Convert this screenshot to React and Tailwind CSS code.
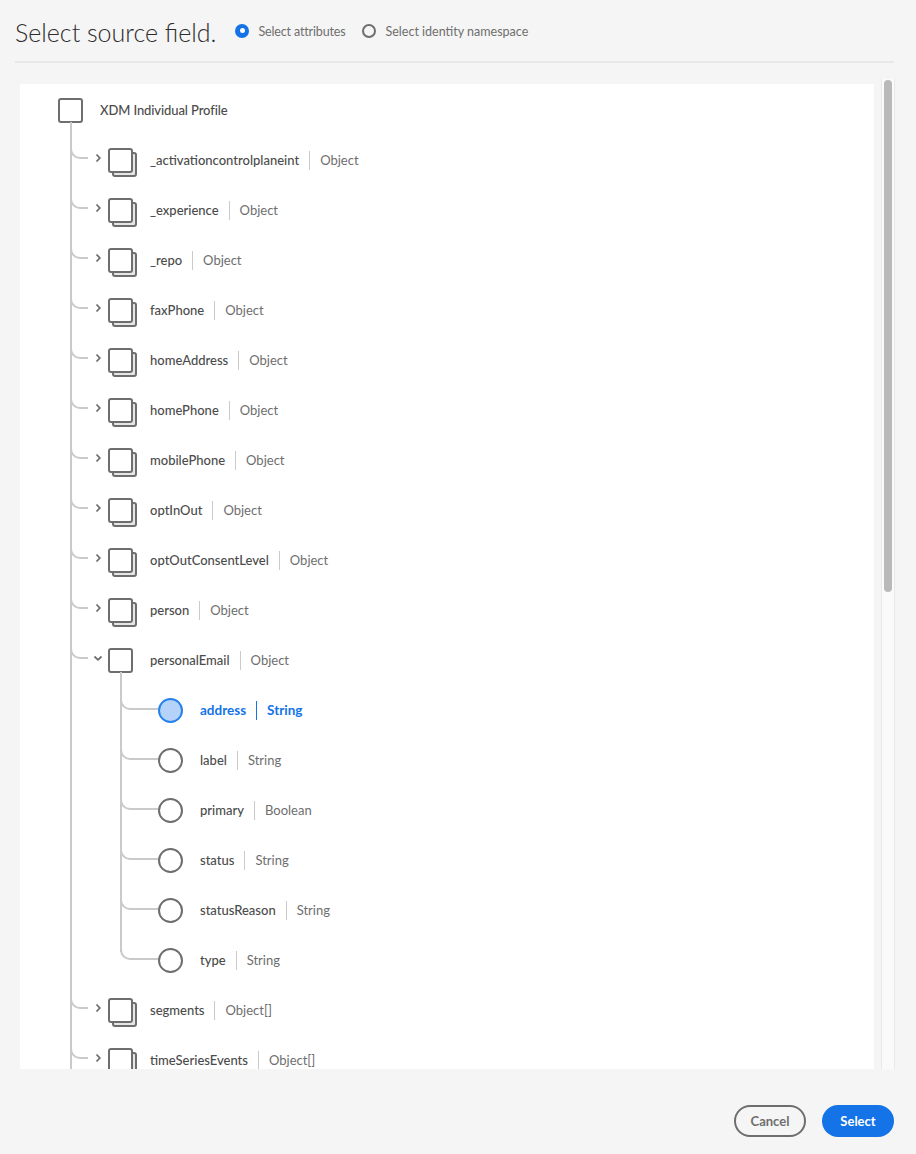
const Box = ({ stacked }) => (
  <span className="relative block w-[25px] h-[25px] shrink-0">
    {stacked && <span className="absolute left-[4px] top-[4px] w-[25px] h-[25px] rounded-[3px] border-2 border-[#6e6e6e] bg-[#e6e6e6]" />}
    <span className="absolute inset-0 rounded-[3px] border-2 border-[#6e6e6e] bg-white" />
  </span>
);

const Chevron = ({ open }) => (
  <svg width="10" height="10" viewBox="0 0 10 10" fill="none" stroke="#6e6e6e" strokeWidth="1.8" className="shrink-0">
    <path d={open ? "M1.5 3.5 L5 6.8 L8.5 3.5" : "M3.5 1.5 L6.8 5 L3.5 8.5"} />
  </svg>
);

const Label = ({ name, type, selected }) => (
  <span className={`flex items-center ${selected ? "text-[13.5px] text-[#1473e6] font-bold" : "text-[13px] translate-y-px"}`}>
    <span className={selected ? "" : "text-[#4b4b4b] font-medium"}>{name}</span>
    <span className={`mx-[10px] w-px h-[19px] ${selected ? "bg-[#1473e6]" : "bg-[#cacaca] -translate-y-px"}`} />
    <span className={selected ? "" : "text-[#6e6e6e]"}>{type}</span>
  </span>
);

const ObjectRow = ({ name, type = "Object", open }) => (
  <div className="relative h-[50px] flex items-center pl-[72px]">
    <span className="absolute left-[50px] top-[-1px] w-[18px] h-[25px] border-l-2 border-b-2 border-[#cacaca] rounded-bl-[10px]" />
    <span className="w-[16px] pl-px -mt-[4px] flex justify-start"><Chevron open={open} /></span>
    <Box stacked={!open} />
    <span className="ml-[17px]"><Label name={name} type={type} /></span>
  </div>
);

const LeafRow = ({ name, type, selected }) => (
  <div className="relative h-[50px] flex items-center pl-[138px]">
    <span className="absolute left-[100px] top-0 w-[38px] h-[25px] border-l-2 border-b-2 border-[#cacaca] rounded-bl-[10px]" />
    <span className={`block w-[25px] h-[25px] rounded-full border-2 ${selected ? "border-[#2680eb] bg-[#b5d3f8]" : "border-[#6e6e6e] bg-white"}`} />
    <span className="ml-[17px]"><Label name={name} type={type} selected={selected} /></span>
  </div>
);

const Radio = ({ checked, label }) => (
  <label className={`flex items-center text-[12.5px] text-[#6e6e6e] ${checked ? "gap-[9px] tracking-[-0.15px]" : "gap-[10px]"}`}>
    {checked ? (
      <span className="w-[14px] h-[14px] rounded-full bg-[#1473e6] flex items-center justify-center">
        <span className="w-[5px] h-[5px] rounded-full bg-white" />
      </span>
    ) : (
      <span className="w-[14px] h-[14px] rounded-full border-2 border-[#6e6e6e]" />
    )}
    <span className="translate-y-[2px]">{label}</span>
  </label>
);

const before = ["_activationcontrolplaneint", "_experience", "_repo", "faxPhone", "homeAddress", "homePhone", "mobilePhone", "optInOut", "optOutConsentLevel", "person"];
const leaves = [
  ["address", "String", true],
  ["label", "String"],
  ["primary", "Boolean"],
  ["status", "String"],
  ["statusReason", "String"],
  ["type", "String"],
];

export default function App() {
  return (
    <div className="w-[916px] h-[1154px] bg-[#f5f5f5] flex flex-col overflow-hidden font-['Lato','Open_Sans',sans-serif]">
      <header className="mx-[15px] w-[879px] h-[63px] border-b-2 border-[#e8e8e8] flex items-center shrink-0">
        <h1 className="text-[25px] font-light text-[#2c2c2c] mr-[19px] translate-y-[2px]">Select source field.</h1>
        <div className="flex items-center gap-[16px]">
          <Radio checked label="Select attributes" />
          <Radio label="Select identity namespace" />
        </div>
      </header>
      <div className="flex h-[1006px] shrink-0 pl-[20px]">
        <main className="mt-[21px] w-[854px] h-[985px] bg-white overflow-hidden pt-px">
          <div className="h-[50px] flex items-center pl-[38px]">
            <Box />
            <span className="ml-[17px] text-[13px] font-medium text-[#4b4b4b] translate-y-px tracking-[-0.1px]">XDM Individual Profile</span>
          </div>
          <div className="relative">
            <span className="absolute left-[50px] top-[-13px] bottom-0 w-[2px] bg-[#cacaca]" />
            {before.map((n) => <ObjectRow key={n} name={n} />)}
            <ObjectRow name="personalEmail" open />
            <div className="relative">
              <span className="absolute left-[100px] top-[-13px] bottom-[33px] w-[2px] bg-[#cacaca]" />
              {leaves.map(([n, t, s]) => <LeafRow key={n} name={n} type={t} selected={s} />)}
            </div>
            <ObjectRow name="segments" type="Object[]" />
            <ObjectRow name="timeSeriesEvents" type="Object[]" />
          </div>
        </main>
        <div className="ml-[7px] mt-[16px] w-[14px] h-[990px] bg-[#fafafa] border-x border-[#e8e8e8] px-[2px] pt-px">
          <div className="h-[512px] w-[8px] rounded-full bg-[#b9b9b9]" />
        </div>
      </div>
      <footer className="flex-1 flex items-start justify-end gap-[16px] pr-[22px] pt-[36px]">
        <button className="w-[72px] h-[32px] rounded-full border-2 border-[#6e6e6e] text-[13px] font-bold text-[#6e6e6e] pt-px">Cancel</button>
        <button className="w-[72px] h-[32px] rounded-full bg-[#1473e6] text-[13px] font-bold text-white pt-px">Select</button>
      </footer>
    </div>
  );
}
